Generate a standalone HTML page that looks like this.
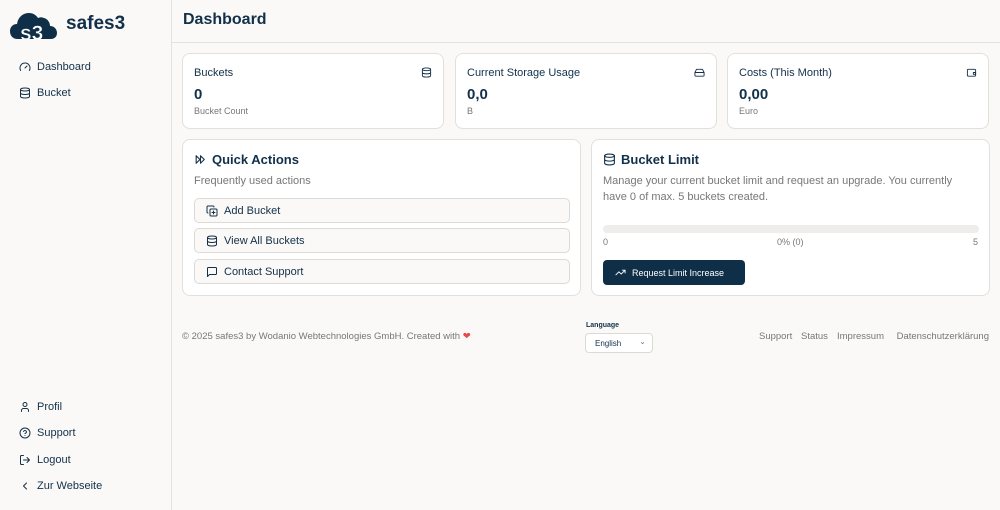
<!DOCTYPE html>
<html><head><style>
*{box-sizing:border-box;margin:0;padding:0}
body{width:1000px;height:510px;background:#faf9f7;font-family:"Liberation Sans",sans-serif;color:#123049;position:relative;overflow:hidden;font-size:11px}
.side{position:absolute;left:0;top:0;width:172px;height:510px;border-right:1px solid #e5e3e0;background:#faf9f7}
.nav{position:absolute;left:19px;display:flex;align-items:center;gap:6px;font-size:11px;color:#123049}
.nav svg{width:12px;height:12px}
.top{position:absolute;left:172px;top:0;right:0;height:43px;border-bottom:1px solid #e5e3e0}
.top h1{position:absolute;left:11px;top:11px;font-size:16px;font-weight:bold}
.card{position:absolute;background:#fff;border:1px solid #e2e0dd;border-radius:8px}
.st .l{position:absolute;left:11px;top:13px;font-size:11px}
.st .v{position:absolute;left:11px;top:32px;font-size:15px;font-weight:bold}
.st .s{position:absolute;left:11px;top:52px;font-size:9px;color:#777}
.st svg{position:absolute;right:11px;top:13px;width:11px;height:11px}
.btn{position:absolute;left:11px;width:376px;height:25px;border:1px solid #dcdad7;border-radius:5px;background:#faf9f7;display:flex;align-items:center;gap:6px;padding-left:11px;font-size:11px}
.btn svg{width:12px;height:12px}
svg{fill:none;stroke:#123049;stroke-width:2;stroke-linecap:round;stroke-linejoin:round}
.f{position:absolute;font-size:9px;color:#777}
.fl{position:absolute;top:331px;font-size:9.5px;color:#777}
</style></head><body>
<div class="side">
<svg style="position:absolute;left:10px;top:9px;width:52px;height:30px;stroke:none" viewBox="0 0 52 30"><path fill="#0f2f48" d="M8 30C2 30 0 26 0 22c0-4 3-7 7-7 1-7 6-11 12-11 4 0 7 2 9 5 2-1 4-1 6 0 4 1 6 5 6 8 4 0 7 3 7 7s-3 6-6 6z"/><text x="10" y="31" font-size="21" font-weight="bold" fill="#fff" stroke="#0f2f48" stroke-width="0.5" font-family="Liberation Sans">s3</text></svg>
<div style="position:absolute;left:66px;top:13px;font-size:19px;font-weight:bold">safes3</div>
<div class="nav" style="top:61px"><svg viewBox="0 0 24 24"><path d="M12 14l4-4M3.3 19a10 10 0 1 1 17.4 0"/></svg>Dashboard</div>
<div class="nav" style="top:87px"><svg viewBox="0 0 24 24"><ellipse cx="12" cy="5" rx="9" ry="3"/><path d="M3 5v14a9 3 0 0 0 18 0V5M3 12a9 3 0 0 0 18 0"/></svg>Bucket</div>
<div class="nav" style="top:401px"><svg viewBox="0 0 24 24"><circle cx="12" cy="7" r="4"/><path d="M19 21v-2a4 4 0 0 0-4-4H9a4 4 0 0 0-4 4v2"/></svg>Profil</div>
<div class="nav" style="top:427px"><svg viewBox="0 0 24 24"><circle cx="12" cy="12" r="10"/><path d="M9.1 9a3 3 0 0 1 5.8 1c0 2-3 3-3 3M12 17h.01"/></svg>Support</div>
<div class="nav" style="top:454px"><svg viewBox="0 0 24 24"><path d="M9 21H5a2 2 0 0 1-2-2V5a2 2 0 0 1 2-2h4M16 17l5-5-5-5M21 12H9"/></svg>Logout</div>
<div class="nav" style="top:480px"><svg viewBox="0 0 24 24"><path d="M15 18l-6-6 6-6"/></svg>Zur Webseite</div>
</div>
<div class="top"><h1>Dashboard</h1></div>

<div class="card st" style="left:182px;top:53px;width:262px;height:76px"><div class="l">Buckets</div><svg viewBox="0 0 24 24"><ellipse cx="12" cy="5" rx="9" ry="3"/><path d="M3 5v14a9 3 0 0 0 18 0V5M3 12a9 3 0 0 0 18 0"/></svg><div class="v">0</div><div class="s">Bucket Count</div></div>
<div class="card st" style="left:455px;top:53px;width:262px;height:76px"><div class="l">Current Storage Usage</div><svg viewBox="0 0 24 24"><path d="M22 12H2M5.5 5h13L22 12v6a2 2 0 0 1-2 2H4a2 2 0 0 1-2-2v-6z"/></svg><div class="v">0,0</div><div class="s">B</div></div>
<div class="card st" style="left:727px;top:53px;width:262px;height:76px"><div class="l">Costs (This Month)</div><svg viewBox="0 0 24 24"><rect x="3" y="5" width="18" height="15" rx="2"/><path d="M16 12h5v4h-5z"/></svg><div class="v">0,00</div><div class="s">Euro</div></div>

<div class="card" style="left:182px;top:139px;width:399px;height:157px">
<div style="position:absolute;left:11px;top:12px;display:flex;align-items:center;gap:5px;font-size:13px;font-weight:bold"><svg width="13" height="13" viewBox="0 0 24 24"><path d="M12 19V5l7 7zM4 19V5l7 7z"/></svg>Quick Actions</div>
<div style="position:absolute;left:11px;top:35px;color:#777;font-size:11px">Frequently used actions</div>
<div class="btn" style="top:58px"><svg viewBox="0 0 24 24"><rect x="8" y="8" width="14" height="14" rx="2"/><path d="M4 16a2 2 0 0 1-2-2V4a2 2 0 0 1 2-2h10a2 2 0 0 1 2 2M15 12v6M12 15h6"/></svg>Add Bucket</div>
<div class="btn" style="top:88px"><svg viewBox="0 0 24 24"><ellipse cx="12" cy="5" rx="9" ry="3"/><path d="M3 5v14a9 3 0 0 0 18 0V5M3 12a9 3 0 0 0 18 0"/></svg>View All Buckets</div>
<div class="btn" style="top:119px"><svg viewBox="0 0 24 24"><path d="M21 15a2 2 0 0 1-2 2H7l-4 4V5a2 2 0 0 1 2-2h14a2 2 0 0 1 2 2z"/></svg>Contact Support</div>
</div>

<div class="card" style="left:591px;top:139px;width:399px;height:157px">
<div style="position:absolute;left:11px;top:12px;display:flex;align-items:center;gap:5px;font-size:13px;font-weight:bold"><svg width="13" height="13" viewBox="0 0 24 24"><ellipse cx="12" cy="5" rx="9" ry="3"/><path d="M3 5v14a9 3 0 0 0 18 0V5M3 12a9 3 0 0 0 18 0"/></svg>Bucket Limit</div>
<div style="position:absolute;left:11px;top:33px;width:375px;color:#777;font-size:11px;line-height:16px">Manage your current bucket limit and request an upgrade. You currently have 0 of max. 5 buckets created.</div>
<div style="position:absolute;left:11px;top:85px;width:376px;height:8px;background:#eeedeb;border-radius:4px"></div>
<div class="f" style="left:11px;top:97px">0</div><div class="f" style="left:185px;top:97px">0% (0)</div><div class="f" style="right:11px;top:97px">5</div>
<div style="position:absolute;left:11px;top:120px;width:142px;height:25px;background:#0f2f48;border-radius:4px;color:#fff;font-size:9px;display:flex;align-items:center;gap:6px;padding-left:12px"><svg width="11" height="11" viewBox="0 0 24 24" style="stroke:#fff"><path d="M22 7l-8.5 8.5-5-5L2 17M16 7h6v6"/></svg>Request Limit Increase</div>
</div>

<div class="f" style="left:182px;top:331px;font-size:9.5px">© 2025 safes3 by Wodanio Webtechnologies GmbH. Created with <span style="color:#e5484d">❤</span></div>
<div style="position:absolute;left:586px;top:322px;font-size:7px;font-weight:bold">Language</div>
<div style="position:absolute;left:585px;top:333px;width:68px;height:20px;border:1px solid #dcdad7;border-radius:4px;background:#fff;font-size:8px;padding:5px 0 0 9px">English<span style="position:absolute;right:6px;top:3px;color:#777">⌄</span></div>
<div class="fl" style="left:759px">Support</div>
<div class="fl" style="left:801px">Status</div>
<div class="fl" style="left:837px">Impressum</div>
<div class="fl" style="left:893px;width:96px;text-align:right">Datenschutzerklärung</div>
</body></html>
